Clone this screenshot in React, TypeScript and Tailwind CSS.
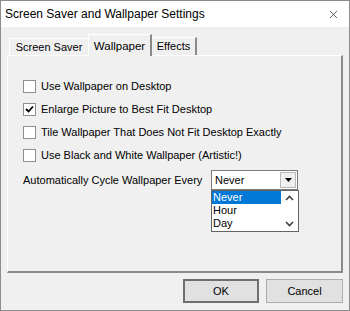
import { X } from 'lucide-react'

const options = [
  { label: 'Use Wallpaper on Desktop', checked: false },
  { label: 'Enlarge Picture to Best Fit Desktop', checked: true },
  { label: 'Tile Wallpaper That Does Not Fit Desktop Exactly', checked: false },
  { label: 'Use Black and White Wallpaper (Artistic!)', checked: false },
]

function Checkbox({ checked }: { checked: boolean }) {
  return (
    <div className="w-[13px] h-[13px] bg-white border border-[#8f8f8f] flex items-center justify-center">
      {checked && (
        <svg width="9" height="9" viewBox="0 0 9 9">
          <path d="M1 4 L3.5 6.5 L8 1.5" stroke="#000" strokeWidth="1.8" fill="none" />
        </svg>
      )}
    </div>
  )
}

export default function App() {
  return (
    <div className="w-[350px] h-[311px] flex flex-col border border-[#8c8c8c] bg-[#f0f0f0] text-black font-['Liberation_Sans',Arial,sans-serif] text-[11px] overflow-hidden select-none">
      {/* Title bar */}
      <div className="h-[26px] bg-white flex items-center justify-between pl-[4px] pr-[9px] shrink-0">
        <span className="text-[12px] whitespace-nowrap">Screen Saver and Wallpaper Settings</span>
        <X className="w-[13px] h-[13px] text-[#222]" strokeWidth={1.3} />
      </div>

      <div className="flex-1 flex flex-col px-[6px] pt-[7px]">
        {/* Tabs */}
        <div className="flex items-end h-[21px] pl-[2px] relative z-10 whitespace-nowrap">
          <div className="h-[17px] flex items-center border-t border-l border-white bg-[#f0f0f0] w-[79px] justify-center">
            Screen Saver
          </div>
          <div className="h-[22px] -mb-[1px] flex items-start pt-[3px] justify-center w-[64px] border-t border-l border-white border-r-2 border-r-[#8a8a8a] bg-[#f0f0f0] text-[11.5px]">
            Wallpaper
          </div>
          <div className="h-[18px] flex items-center justify-center w-[45px] border-t border-white border-r-2 border-r-[#8a8a8a] bg-[#f0f0f0]">
            Effects
          </div>
        </div>

        {/* Tab panel */}
        <div className="relative h-[218px] w-[336px] border-t border-l border-white border-r-2 border-b-2 border-r-[#8a8a8a] border-b-[#8a8a8a] pt-[24px] pl-[15px]">
          <div className="flex flex-col gap-[10px]">
            {options.map((o) => (
              <div key={o.label} className="flex items-center gap-[5px] h-[13px]">
                <Checkbox checked={o.checked} />
                <span className="leading-[13px] whitespace-nowrap">{o.label}</span>
              </div>
            ))}
          </div>

          <div className="flex items-center mt-[8px] h-[20px]">
            <span className="w-[188px] whitespace-nowrap">Automatically Cycle Wallpaper Every</span>
            <div className="relative w-[87px] h-[20px] bg-white border border-[#7a7a7a] flex items-center">
              <span className="pl-[3px] flex-1">Never</span>
              <div className="w-[16px] h-[16px] mr-[1px] bg-[#f0f0f0] border border-[#b8b8b8] flex items-center justify-center">
                <svg width="7" height="4" viewBox="0 0 7 4">
                  <path d="M0 0 H7 L3.5 4 Z" fill="#000" />
                </svg>
              </div>

              {/* Dropdown list */}
              <div className="absolute left-[-1px] top-[19px] w-[88px] h-[42px] bg-white border border-[#646464] flex z-20">
                <div className="flex-1 flex flex-col leading-[13px]">
                  <div className="h-[13px] bg-[#0078d7] text-white pl-[1px]">Never</div>
                  <div className="h-[13px] pl-[1px]">Hour</div>
                  <div className="h-[13px] pl-[1px]">Day</div>
                </div>
                <div className="w-[17px] flex flex-col items-center justify-between py-[4px] bg-white">
                  <svg width="9" height="6" viewBox="0 0 9 6">
                    <path d="M1 5 L4.5 1.5 L8 5" stroke="#404040" strokeWidth="1.6" fill="none" />
                  </svg>
                  <svg width="9" height="6" viewBox="0 0 9 6">
                    <path d="M1 1 L4.5 4.5 L8 1" stroke="#404040" strokeWidth="1.6" fill="none" />
                  </svg>
                </div>
              </div>
            </div>
          </div>
        </div>

        {/* Buttons */}
        <div className="flex justify-end gap-[7px] mt-[6px]">
          <button className="w-[76px] h-[24px] bg-[#e1e1e1] border-2 border-[#6f6f6f]">OK</button>
          <button className="w-[77px] h-[24px] bg-[#e1e1e1] border border-[#adadad]">Cancel</button>
        </div>
      </div>
    </div>
  )
}
